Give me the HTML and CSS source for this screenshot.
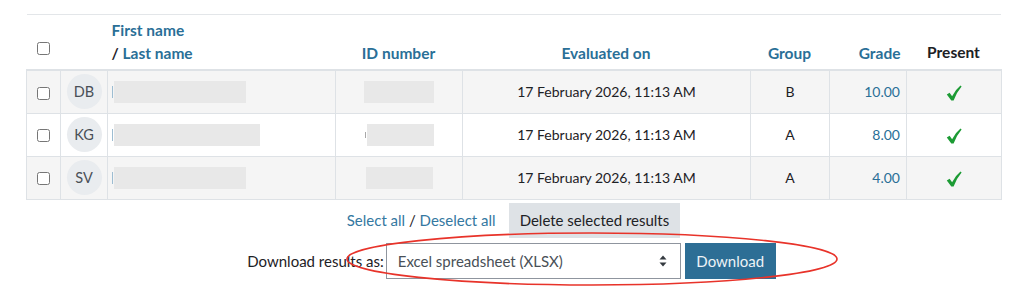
FILE: index.html
```html
<!DOCTYPE html>
<html lang="en">
<head>
<meta charset="utf-8">
<title>Results</title>
<link rel="stylesheet" href="styles.css">
</head>
<body>
<div class="page">
  <div class="topline"></div>
  <table class="results">
    <colgroup>
      <col class="c-check"><col class="c-avatar"><col class="c-name"><col class="c-id"><col class="c-date"><col class="c-group"><col class="c-grade"><col class="c-present">
    </colgroup>
    <thead>
      <tr>
        <th class="chk"><input type="checkbox"></th>
        <th></th>
        <th class="left"><a href="#">First name</a><br><span class="sep">/</span> <a href="#">Last name</a></th>
        <th><a href="#">ID number</a></th>
        <th><a href="#">Evaluated on</a></th>
        <th><a href="#">Group</a></th>
        <th class="right"><a href="#">Grade</a></th>
        <th class="plain">Present</th>
      </tr>
    </thead>
    <tbody>
      <tr class="odd">
        <td class="chk"><input type="checkbox"></td>
        <td class="av"><span class="avatar">DB</span></td>
        <td class="left"><span class="sliver"></span><span class="redact" style="width:132px"></span></td>
        <td><span class="redact" style="width:70px"></span></td>
        <td>17 February 2026, 11:13 AM</td>
        <td>B</td>
        <td class="right"><a href="#">10.00</a></td>
        <td><svg class="tick" viewBox="0 0 16 16" width="16" height="16"><path d="M0.8 9.4 L3.6 7.8 L6.1 11.2 Q9.2 5 14.5 0.6 L15.6 1.6 Q10.8 7.2 7.6 15.4 L5.3 15.6 Z" fill="#1c9b34"/></svg></td>
      </tr>
      <tr>
        <td class="chk"><input type="checkbox"></td>
        <td class="av"><span class="avatar">KG</span></td>
        <td class="left"><span class="sliver"></span><span class="redact" style="width:146px"></span></td>
        <td><span class="sliver dark"></span><span class="redact" style="width:67px"></span></td>
        <td>17 February 2026, 11:13 AM</td>
        <td>A</td>
        <td class="right"><a href="#">8.00</a></td>
        <td><svg class="tick" viewBox="0 0 16 16" width="16" height="16"><path d="M0.8 9.4 L3.6 7.8 L6.1 11.2 Q9.2 5 14.5 0.6 L15.6 1.6 Q10.8 7.2 7.6 15.4 L5.3 15.6 Z" fill="#1c9b34"/></svg></td>
      </tr>
      <tr class="odd">
        <td class="chk"><input type="checkbox"></td>
        <td class="av"><span class="avatar">SV</span></td>
        <td class="left"><span class="sliver"></span><span class="redact" style="width:132px"></span></td>
        <td><span class="redact" style="width:67px"></span></td>
        <td>17 February 2026, 11:13 AM</td>
        <td>A</td>
        <td class="right"><a href="#">4.00</a></td>
        <td><svg class="tick" viewBox="0 0 16 16" width="16" height="16"><path d="M0.8 9.4 L3.6 7.8 L6.1 11.2 Q9.2 5 14.5 0.6 L15.6 1.6 Q10.8 7.2 7.6 15.4 L5.3 15.6 Z" fill="#1c9b34"/></svg></td>
      </tr>
    </tbody>
  </table>

  <div class="actions">
    <div class="row1">
      <span class="selects"><a href="#">Select all</a> / <a href="#">Deselect all</a></span>
      <button class="btn-secondary" type="button">Delete selected results</button>
    </div>
    <div class="row2">
      <label class="dl-label" for="fmt">Download results as:</label>
      <div class="select-wrap">
        <select id="fmt" class="select"><option>Excel spreadsheet (XLSX)</option></select>
        <svg class="updown" viewBox="0 0 8 12" width="8" height="12"><path d="M4 0.5 L7.5 4.5 L0.5 4.5 Z M4 11.5 L7.5 7.5 L0.5 7.5 Z" fill="#343a40"/></svg>
      </div>
      <button class="btn-primary" type="button">Download</button>
    </div>
  </div>

  <svg class="annot" width="1024" height="295" viewBox="0 0 1024 295"><ellipse cx="592" cy="259" rx="245" ry="26" fill="none" stroke="#e8332a" stroke-width="1.6"/></svg>
</div>
</body>
</html>
```

FILE: styles.css
```css
html, body {
  margin: 0;
  padding: 0;
  background: #fff;
}
body {
  font-family: "Lato", "Noto Sans", "Liberation Sans", sans-serif;
  font-size: 15px;
  color: #1d2125;
}
a {
  color: #2a6f97;
  text-decoration: none;
}
.page {
  position: relative;
  width: 1024px;
  height: 295px;
  overflow: hidden;
  padding: 14px 0 0 26px;
  box-sizing: border-box;
}
.topline {
  width: 974px;
  margin-left: 1px;
  height: 1px;
  background: #e3e6e9;
}
.results {
  width: 975px;
  border-collapse: collapse;
  table-layout: fixed;
}
.c-check { width: 34px; }
.c-avatar { width: 47px; }
.c-name { width: 228px; }
.c-id { width: 127px; }
.c-date { width: 288px; }
.c-group { width: 79px; }
.c-grade { width: 77px; }
.c-present { width: 95px; }

.results th {
  vertical-align: bottom;
  padding: 4px 5px 4px 4px;
  font-weight: 700;
  font-size: 15.5px;
  line-height: 23px;
  text-align: center;
  border-bottom: 2px solid #dee2e6;
}
.results th a { color: #2a6f97; }
.results th.plain { color: #1d2125; padding-bottom: 5px; }
.results th.left, .results td.left { text-align: left; }
.results th.right, .results td.right { text-align: right; padding-right: 6px; }
.results th.chk { padding: 0 0 11px 0; text-align: center; }
.results td {
  height: 43px;
  padding: 0 4px;
  text-align: center;
  vertical-align: middle;
  border: 1px solid #dee2e6;
  line-height: 20px;
  font-size: 14px;
  box-sizing: border-box;
}
.results tr.odd td { background: #f5f5f5; }
.results td.chk { padding: 0; text-align: center; }
input[type="checkbox"] {
  width: 13px;
  height: 13px;
  margin: 0 1px 0 0;
  vertical-align: middle;
}
.results td.av { padding: 0; }
.avatar {
  display: inline-flex;
  align-items: center;
  justify-content: center;
  width: 35px;
  height: 35px;
  border-radius: 50%;
  background: #e9ecef;
  color: #495057;
  font-size: 14.5px;
  vertical-align: middle;
}
.redact {
  display: inline-block;
  height: 22px;
  background: #e8e8e8;
  vertical-align: middle;
}
.sliver {
  display: inline-block;
  width: 1px;
  height: 12px;
  margin-right: 1px;
  background: #9dbdd2;
  vertical-align: middle;
}
.sliver.dark { background: #a8a8a8; height: 6px; }
.tick { vertical-align: middle; }

.actions {
  width: 975px;
  display: flex;
  flex-direction: column;
  align-items: center;
  gap: 5px;
  margin-top: 3px;
}
.row1, .row2 {
  display: flex;
  align-items: center;
}
.row1 { gap: 13px; padding-left: 0; }
.selects { color: #1d2125; }
.selects a { color: #3478a1; }
.btn-secondary {
  height: 35px;
  padding: 0 11px;
  border: 0;
  background: #dee2e6;
  color: #1d2125;
  font: inherit;
  font-size: 15px;
  cursor: pointer;
}
.row2 { gap: 2px; margin-left: -4px; }
.select-wrap {
  position: relative;
  width: 295px;
  height: 36px;
}
.select {
  appearance: none;
  -webkit-appearance: none;
  width: 100%;
  height: 100%;
  border: 1px solid #8f959e;
  border-radius: 0;
  background: #fff;
  color: #495057;
  font: inherit;
  font-size: 15px;
  padding: 0 28px 0 11px;
}
.updown {
  position: absolute;
  right: 14px;
  top: 12px;
  pointer-events: none;
}
.btn-primary {
  margin-left: 2px;
  height: 36px;
  width: 91px;
  border: 0;
  background: #2d6e95;
  color: #eef3f7;
  font: inherit;
  font-size: 15px;
  cursor: pointer;
}
.annot {
  position: absolute;
  left: 0;
  top: 0;
  pointer-events: none;
}
```
